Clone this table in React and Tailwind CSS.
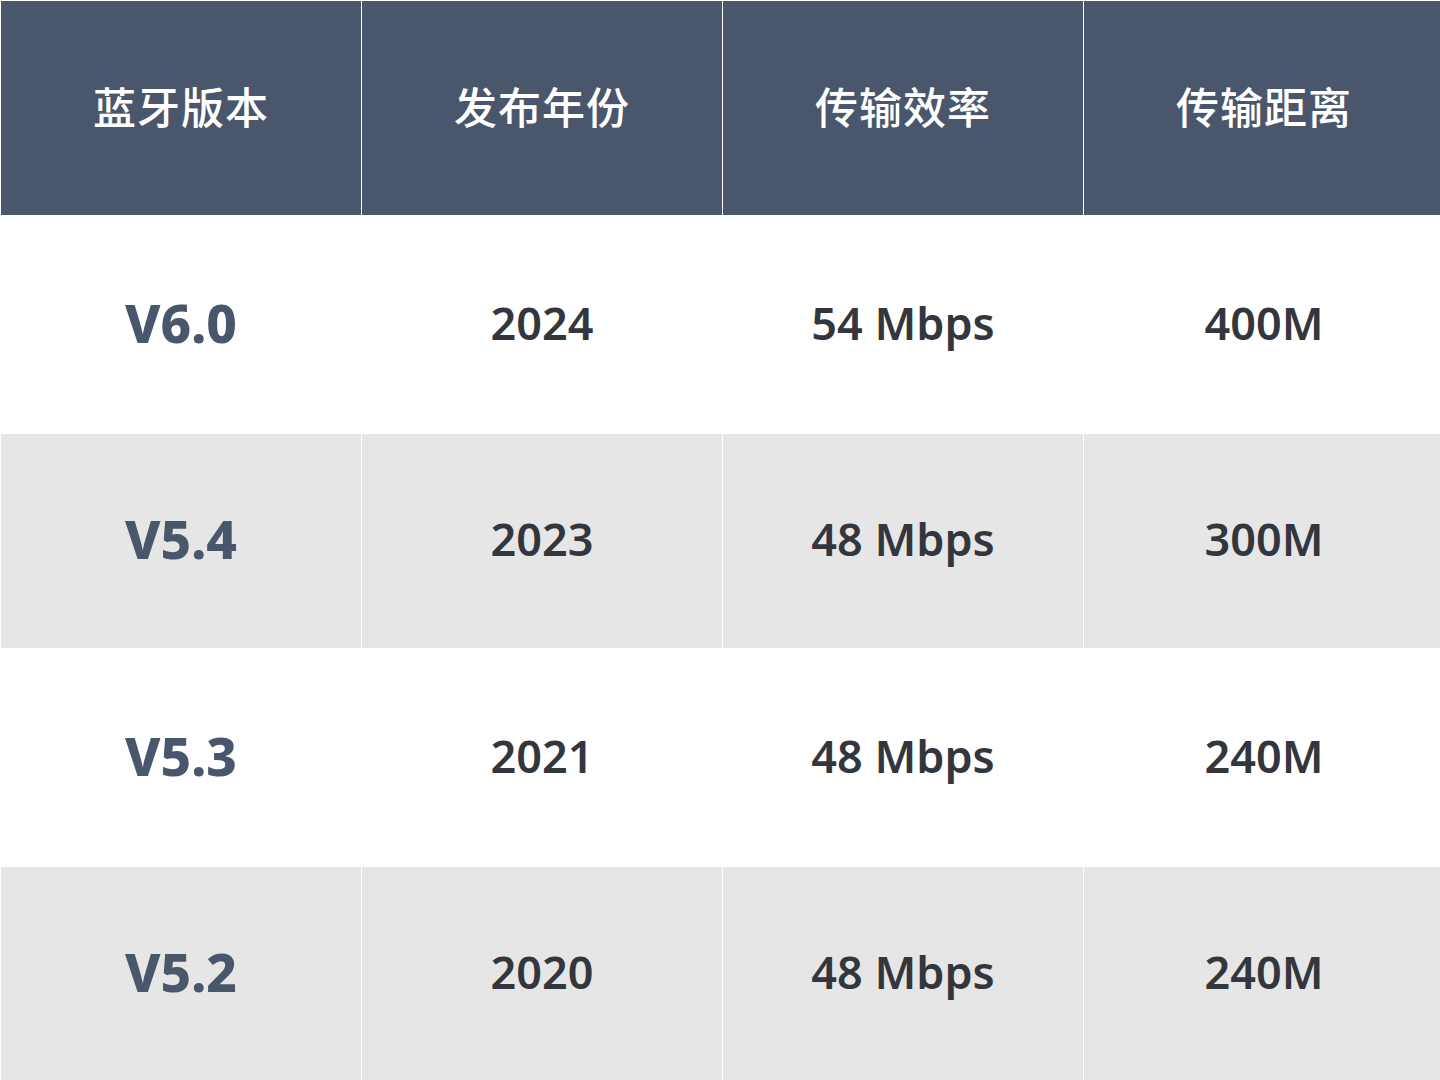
const header = ["蓝牙版本", "发布年份", "传输效率", "传输距离"];
const rows = [
  ["V6.0", "2024", "54 Mbps", "400M"],
  ["V5.4", "2023", "48 Mbps", "300M"],
  ["V5.3", "2021", "48 Mbps", "240M"],
  ["V5.2", "2020", "48 Mbps", "240M"],
];
const rowH = ["h-[217px]", "h-[214px]", "h-[217px]", "h-[214px]"];
const rowBg = ["bg-white", "bg-[#e6e6e6]", "bg-white", "bg-[#e6e6e6]"];

export default function App() {
  return (
    <div className="w-[1440px] h-[1080px] overflow-hidden bg-white">
      <div
        className="w-[1445px] pl-px pt-px grid grid-cols-[repeat(4,360px)] gap-px bg-white"
        style={{ fontFamily: '"Noto Sans", "Noto Sans CJK SC", sans-serif' }}
      >
        {header.map((h) => (
          <div
            key={h}
            className="h-[214px] pb-[5px] bg-[#4a566b] flex items-center justify-center text-white text-[43px] font-medium tracking-[1px]"
            style={{ fontFamily: '"Noto Sans CJK SC", sans-serif' }}
          >
            {h}
          </div>
        ))}
        {rows.map((r, i) =>
          r.map((c, j) => (
            <div
              key={i + "-" + j}
              className={`${rowH[i]} ${rowBg[i]} pb-[4px] flex items-center justify-center ${
                j === 0
                  ? "text-[#4a566b] text-[53px] font-extrabold"
                  : "text-[#33373d] text-[45px] font-semibold"
              }`}
            >
              {c}
            </div>
          ))
        )}
      </div>
    </div>
  );
}
